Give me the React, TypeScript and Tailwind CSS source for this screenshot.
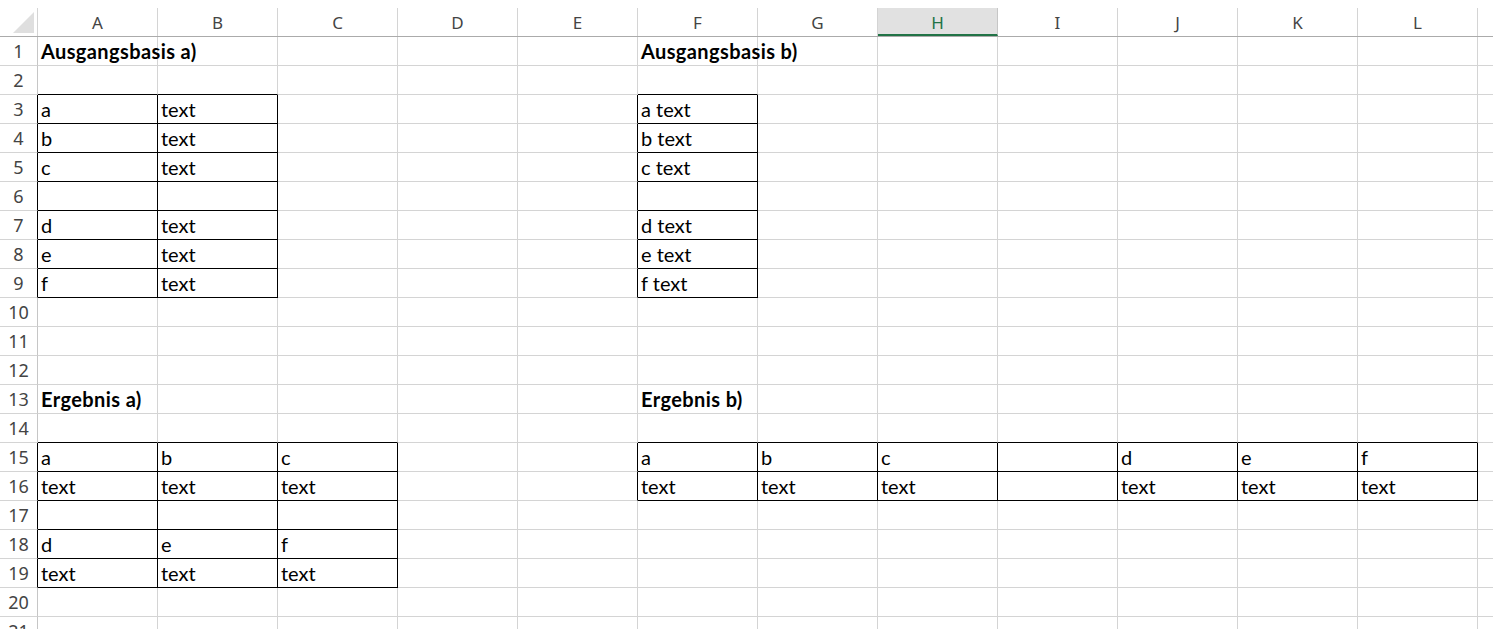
import React from "react";

const COLS = ["A", "B", "C", "D", "E", "F", "G", "H", "I", "J", "K", "L"];
const ROW_COUNT = 21;

type Cell = { text: string; bold?: boolean };

const cells: Record<string, Cell> = {
  "1-0": { text: "Ausgangsbasis a)", bold: true },
  "1-5": { text: "Ausgangsbasis b)", bold: true },
  "13-0": { text: "Ergebnis a)", bold: true },
  "13-5": { text: "Ergebnis b)", bold: true },
};

// Ausgangsbasis a) / b)
const letters: Record<number, string> = { 3: "a", 4: "b", 5: "c", 7: "d", 8: "e", 9: "f" };
Object.entries(letters).forEach(([r, l]) => {
  cells[`${r}-0`] = { text: l };
  cells[`${r}-1`] = { text: "text" };
  cells[`${r}-5`] = { text: `${l} text` };
});

// Ergebnis a)
["a", "b", "c"].forEach((l, i) => {
  cells[`15-${i}`] = { text: l };
  cells[`16-${i}`] = { text: "text" };
});
["d", "e", "f"].forEach((l, i) => {
  cells[`18-${i}`] = { text: l };
  cells[`19-${i}`] = { text: "text" };
});

// Ergebnis b)
[
  [5, "a"],
  [6, "b"],
  [7, "c"],
  [9, "d"],
  [10, "e"],
  [11, "f"],
].forEach(([c, l]) => {
  cells[`15-${c}`] = { text: l as string };
  cells[`16-${c}`] = { text: "text" };
});

function boxed(r: number, c: number) {
  if (r >= 3 && r <= 9 && (c === 0 || c === 1 || c === 5)) return true;
  if (r >= 15 && r <= 19 && c >= 0 && c <= 2) return true;
  if ((r === 15 || r === 16) && c >= 5 && c <= 11) return true;
  return false;
}

function GridCell({ r, c }: { r: number; c: number }) {
  const cell = cells[`${r}-${c}`];
  const bottomDark = boxed(r, c) || boxed(r + 1, c);
  const rightDark = boxed(r, c) || boxed(r, c + 1);
  return (
    <div
      className={`relative h-[29px] w-[120px] shrink-0 border-b border-r ${
        bottomDark ? "border-b-black" : "border-b-[#d4d4d4]"
      } ${rightDark ? "border-r-black" : "border-r-[#d4d4d4]"}`}
    >
      {cell && (
        <span
          className={`absolute left-[3px] top-0 whitespace-nowrap text-[20px] leading-[28px] text-black ${
            cell.bold ? "font-bold tracking-[0.4px]" : ""
          }`}
        >
          {cell.text}
        </span>
      )}
    </div>
  );
}

export default function App() {
  const rows = Array.from({ length: ROW_COUNT }, (_, i) => i + 1);

  return (
    <div className="h-[629px] w-[1493px] overflow-hidden bg-white font-['Lato','Liberation_Sans',sans-serif]">
      <div className="h-[8px]" />

      {/* column headers */}
      <div className="flex h-[29px] border-b border-[#ababab]">
        <div className="relative h-[28px] w-[38px] shrink-0 border-r border-[#d4d4d4]">
          <svg width="22" height="22" viewBox="0 0 22 22" className="absolute left-[13px] top-[4px]">
            <polygon points="21,0 21,21 0,21" fill="#dfdfdf" />
          </svg>
        </div>
        {COLS.map((col) =>
          col === "H" ? (
            <div
              key={col}
              className="flex h-[28px] w-[120px] shrink-0 items-center justify-center border-r border-b-2 border-r-[#c6c6c6] border-b-[#217346] bg-[#e1e1e1] pt-[3px] font-['Noto_Sans',sans-serif] text-[17px] text-[#217346]"
            >
              {col}
            </div>
          ) : (
            <div
              key={col}
              className="flex h-[28px] w-[120px] shrink-0 items-center justify-center border-r border-[#d4d4d4] pt-[1px] font-['Noto_Sans',sans-serif] text-[17px] text-[#444444]"
            >
              {col}
            </div>
          )
        )}
        <div className="flex-1" />
      </div>

      {/* rows */}
      {rows.map((r) => (
        <div key={r} className="flex">
          <div
            className={`flex h-[29px] w-[38px] shrink-0 items-end justify-center border-b border-r border-b-[#d4d4d4] pb-[1px] font-['Noto_Sans',sans-serif] text-[18px] leading-[26px] text-[#444444] ${
              boxed(r, 0) ? "border-r-black" : "border-r-[#c6c6c6]"
            }`}
          >
            {r}
          </div>
          {COLS.map((_, c) => (
            <GridCell key={c} r={r} c={c} />
          ))}
          <div className="h-[29px] flex-1 border-b border-[#d4d4d4]" />
        </div>
      ))}
    </div>
  );
}
